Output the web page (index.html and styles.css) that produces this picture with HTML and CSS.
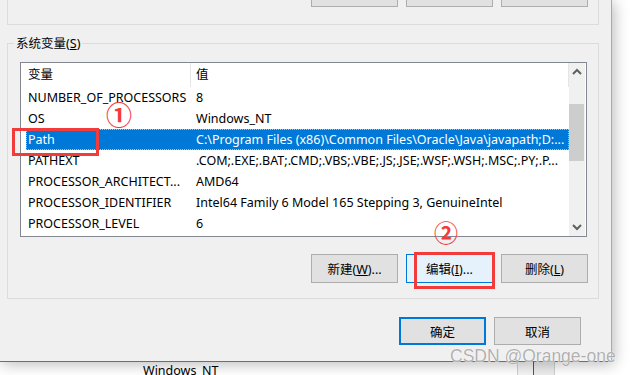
FILE: index.html
```html
<!DOCTYPE html>
<html lang="zh-CN">
<head>
    <meta charset="UTF-8">
    <title>环境变量</title>
    <link rel="stylesheet" href="styles.css">
</head>
<body>
    <div class="screen">
        <div class="dialog">
            <!-- user variables group, mostly scrolled off the top -->
            <div class="group-top">
                <div class="btn-row top-btns">
                    <button class="btn"></button>
                    <button class="btn"></button>
                    <button class="btn"></button>
                </div>
            </div>

            <div class="group">
                <div class="group-title">系统变量(<u>S</u>)</div>

                <div class="listbox">
                    <div class="rows">
                        <div class="list-head">
                            <div class="col-name">变量</div>
                            <div class="col-value">值</div>
                        </div>
                        <div class="row">
                            <div class="col-name">NUMBER_OF_PROCESSORS</div>
                            <div class="col-value">8</div>
                        </div>
                        <div class="row">
                            <div class="col-name">OS</div>
                            <div class="col-value">Windows_NT</div>
                        </div>
                        <div class="row selected">
                            <div class="col-name">Path</div>
                            <div class="col-value">C:\Program Files (x86)\Common Files\Oracle\Java\javapath;D:...</div>
                        </div>
                        <div class="row">
                            <div class="col-name">PATHEXT</div>
                            <div class="col-value">.COM;.EXE;.BAT;.CMD;.VBS;.VBE;.JS;.JSE;.WSF;.WSH;.MSC;.PY;.P...</div>
                        </div>
                        <div class="row">
                            <div class="col-name">PROCESSOR_ARCHITECT...</div>
                            <div class="col-value">AMD64</div>
                        </div>
                        <div class="row">
                            <div class="col-name">PROCESSOR_IDENTIFIER</div>
                            <div class="col-value">Intel64 Family 6 Model 165 Stepping 3, GenuineIntel</div>
                        </div>
                        <div class="row">
                            <div class="col-name">PROCESSOR_LEVEL</div>
                            <div class="col-value">6</div>
                        </div>
                    </div>

                    <div class="scrollbar">
                        <svg class="arrow" width="16" height="17" viewBox="0 0 16 17">
                            <polyline points="4,11 8,7 12,11" fill="none" stroke="#606060" stroke-width="2"/>
                        </svg>
                        <div class="track">
                            <div class="thumb"></div>
                        </div>
                        <svg class="arrow" width="16" height="17" viewBox="0 0 16 17">
                            <polyline points="4,6 8,10 12,6" fill="none" stroke="#606060" stroke-width="2"/>
                        </svg>
                    </div>
                </div>

                <div class="btn-row group-btns">
                    <button class="btn">新建(<u>W</u>)...</button>
                    <button class="btn hover">编辑(<u>I</u>)...</button>
                    <button class="btn">删除(<u>L</u>)</button>
                </div>
            </div>

            <div class="btn-row dialog-btns">
                <button class="btn default">确定</button>
                <button class="btn">取消</button>
            </div>
        </div>

        <div class="behind">
            <span class="behind-text">Windows_NT</span>
            <span class="behind-scroll"></span>
        </div>

        <!-- annotations drawn over the screenshot -->
        <div class="mark mark-path"></div>
        <div class="num num-1">①</div>
        <div class="mark mark-edit"></div>
        <div class="num num-2">②</div>
        <div class="watermark">CSDN @Orange-one</div>
    </div>
</body>
</html>
```

FILE: styles.css
```css
* {
    margin: 0;
    padding: 0;
    box-sizing: border-box;
}

body {
    background-color: #fff;
    font-family: "Noto Sans", "Noto Sans CJK SC", sans-serif;
    font-size: 12.5px;
    color: #000;
    overflow: hidden;
}

.screen {
    position: relative;
    width: 630px;
    height: 375px;
    overflow: hidden;
}

/* Dialog window */
.dialog {
    position: relative;
    z-index: 1;
    width: 612px;
    height: 362px;
    padding: 0 12px 0 7px;
    background-color: #f0f0f0;
    border-right: 1px solid #a9a9a9;
    border-bottom: 1px solid #6e6e6e;
    box-shadow: 2px 2px 14px rgba(0, 0, 0, 0.28);
}

/* Buttons */
.btn-row {
    display: flex;
    justify-content: flex-end;
    gap: 8px;
}

.btn {
    width: 87px;
    height: 29px;
    font-family: inherit;
    font-size: 12.5px;
    color: #000;
    background-color: #e1e1e1;
    border: 1px solid #adadad;
}

.btn.hover {
    background-color: #e5f1fb;
    border-color: #0078d7;
}

.btn.default {
    border: 2px solid #0078d7;
}

/* Upper group box (cut off) */
.group-top {
    height: 25px;
    border: 1px solid #dcdcdc;
    border-top: none;
}

.top-btns {
    padding-right: 10px;
}

.top-btns .btn {
    height: 7px;
    border-top: none;
}

/* System variables group */
.group {
    height: 256px;
    margin-top: 18px;
    border: 1px solid #dcdcdc;
}

.group-title {
    width: fit-content;
    margin: -9px 0 0 6px;
    padding: 0 2px;
    line-height: 17px;
    background-color: #f0f0f0;
}

/* List view */
.listbox {
    display: flex;
    width: 567px;
    height: 175px;
    margin: 10px 0 0 12px;
    background-color: #fff;
    border: 1px solid #828790;
}

.rows {
    flex: 1;
    overflow: hidden;
}

.list-head,
.row {
    display: flex;
    white-space: nowrap;
}

.list-head {
    height: 24px;
    line-height: 24px;
    margin-left: 5px;
}

.list-head .col-name {
    border-right: 1px solid #e5e5e5;
}

.list-head .col-value {
    border-right: 1px solid #e5e5e5;
}

.row {
    height: 21px;
    line-height: 21px;
    margin-left: 5px;
}

.col-name {
    width: 165px;
    padding-left: 2px;
    overflow: hidden;
}

.col-value {
    flex: 1;
    padding-left: 5px;
    overflow: hidden;
}

.row.selected {
    background-color: #0078d7;
    color: #fff;
    outline: 1px dotted #f3b56a;
    outline-offset: -1px;
}

/* Scrollbar */
.scrollbar {
    display: flex;
    flex-direction: column;
    width: 16px;
    margin-right: 1px;
    background-color: #f0f0f0;
}

.arrow {
    display: block;
}

.track {
    flex: 1;
    padding-top: 24px;
}

.thumb {
    height: 57px;
    width: 15px;
    background-color: #cdcdcd;
}

.group-btns {
    margin: 17px 10px 0 0;
}

.dialog-btns {
    margin: 18px 18px 0 0;
}

.dialog-btns .btn {
    height: 28px;
}

/* Window behind the dialog */
.behind {
    display: flex;
    height: 14px;
    padding-left: 143px;
    line-height: 17px;
}

.behind-text {
    width: 374px;
}

.behind-scroll {
    width: 38px;
    height: 14px;
    background-color: #ececec;
    border-left: 1px solid #d0d0d0;
    border-right: 1px solid #d0d0d0;
    box-shadow: inset 15px 0 0 #f4f4f4, inset 16px 0 0 #555;
}

/* Red annotations */
.mark {
    position: absolute;
    z-index: 2;
    border: 3px solid #f23c3c;
}

.mark-path {
    left: 12px;
    top: 128px;
    width: 87px;
    height: 28px;
}

.mark-edit {
    left: 414px;
    top: 252px;
    width: 81px;
    height: 37px;
}

.num {
    position: absolute;
    z-index: 2;
    font-family: "Noto Sans CJK SC", sans-serif;
    font-weight: 700;
    line-height: 24px;
    color: #f23c3c;
}

.num-1 {
    left: 106px;
    top: 102px;
    font-size: 26px;
}

.num-2 {
    left: 434px;
    top: 220px;
    font-size: 24px;
}

.watermark {
    position: absolute;
    z-index: 2;
    left: 450px;
    top: 346px;
    font-family: "Liberation Sans", sans-serif;
    font-size: 17.5px;
    color: rgba(150, 150, 150, 0.75);
    text-shadow: 0 0 1px #fff, 0 0 1px #fff;
}
```
